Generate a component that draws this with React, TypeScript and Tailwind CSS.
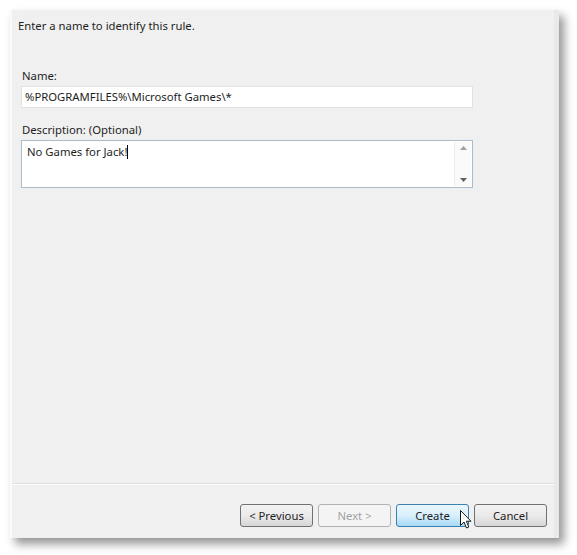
export default function App() {
  const font = "font-['Segoe_UI','Noto_Sans','Liberation_Sans',sans-serif] text-[11.3px] leading-[16px] text-[#1e1e1e]";

  return (
    <div className={`w-[577px] h-[555px] bg-white pt-[10px] pl-[10px] ${font}`}>
      <div className="relative w-[549px] h-[528px] bg-[#f0f0f0] flex flex-col border-l-2 border-l-[#fafafa] border-r-[5px] border-r-[#e9e9e9] shadow-[5px_6px_9px_rgba(0,0,0,0.42)]">
        <div className="flex-1 pl-[6px]">
          <p className="mt-[8px]">Enter a name to identify this rule.</p>

          <div className="mt-[34px] pl-[3px] w-[455px]">
            <label className="block pl-[1px]">Name:</label>
            <div className="mt-[2px] h-[22px] bg-white border border-[#e2e2e2] px-[3px] flex items-center">
              %PROGRAMFILES%\Microsoft Games\*
            </div>

            <label className="block mt-[14px] pl-[1px]">Description: (Optional)</label>
            <div className="mt-[2px] h-[48px] bg-white border border-[#a9bccd] flex">
              <div className="flex-1 px-[5px] pt-[3px]">
                <span>No Games for Jack!</span>
                <span className="inline-block w-px h-[14px] bg-black align-[-3px]" />
              </div>
              <div className="w-[17px] my-[1px] mr-[1px] border-l border-[#ececec] bg-[#fafafa] flex flex-col items-center justify-between py-[4px]">
                <svg width="7" height="4" viewBox="0 0 7 4">
                  <path d="M0 4 L3.5 0 L7 4 Z" fill="#a0a0a0" />
                </svg>
                <svg width="7" height="4" viewBox="0 0 7 4">
                  <path d="M0 0 L3.5 4 L7 0 Z" fill="#606060" />
                </svg>
              </div>
            </div>
          </div>
        </div>

        <div className="h-[55px] border-t border-t-[#dfdfdf] shadow-[inset_0_1px_0_#fdfdfd] flex items-start justify-end gap-[5px] pr-[7px] pt-[20px]">
          <button className="w-[73px] h-[23px] rounded-[3px] border border-[#707070] bg-gradient-to-b from-[#f2f2f2] via-[#ebebeb] to-[#d6d6d6] text-[#1e1e1e]">
            &lt; Previous
          </button>
          <button className="w-[73px] h-[23px] rounded-[3px] border border-[#adb2b5] bg-[#f4f4f4] text-[#a3a3a3]">
            Next &gt;
          </button>
          <button className="relative w-[73px] h-[23px] rounded-[3px] border border-[#3c7fb1] bg-gradient-to-b from-[#eaf6fd] via-[#d9f0fc] to-[#a7d9f5] text-[#1e1e1e]">
            Create
            <svg className="absolute left-[63px] top-[5px]" width="12" height="19" viewBox="0 0 12 19">
              <path
                d="M0.5 0.5 L0.5 15.5 L4 12 L6.5 18 L8.8 17 L6.3 11.2 L11 11.2 Z"
                fill="white"
                stroke="#1a1a1a"
                strokeWidth="1"
                strokeLinejoin="round"
              />
            </svg>
          </button>
          <button className="w-[73px] h-[23px] rounded-[3px] border border-[#707070] bg-gradient-to-b from-[#f2f2f2] via-[#ebebeb] to-[#d6d6d6] text-[#1e1e1e]">
            Cancel
          </button>
        </div>
      </div>
    </div>
  );
}
